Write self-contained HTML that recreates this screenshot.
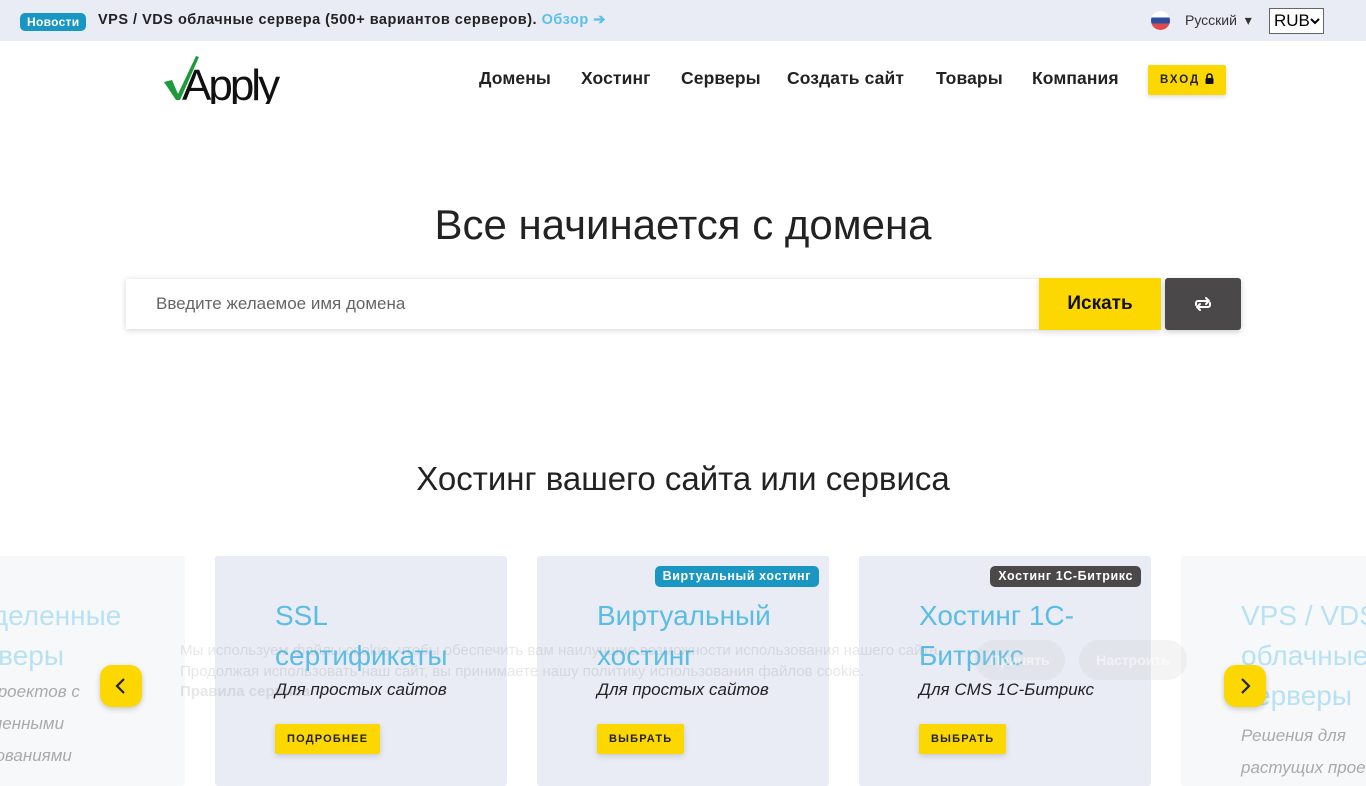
<!DOCTYPE html>
<html><head><meta charset="utf-8"><style>
*{box-sizing:border-box;margin:0;padding:0}
body{width:1366px;height:768px;overflow:hidden;background:#fff;font-family:"Liberation Sans",sans-serif;color:#222;position:relative}
.top{height:41px;background:#e9ecf4;position:relative}
.badge{position:absolute;left:20px;top:13px;height:18px;padding:0 7px;background:#1a96c2;color:#fff;border-radius:5px;font-size:12px;font-weight:bold;line-height:18px;letter-spacing:.3px}
.news{position:absolute;left:98px;top:12px;font-size:14.5px;font-weight:bold;letter-spacing:.5px;color:#222}
.news span{color:#5bc0e8}
.flag{position:absolute;left:1151px;top:11px;width:19px;height:19px;border-radius:50%;background:linear-gradient(#fff 0 33%,#2a4ea0 33% 66%,#e04a4a 66%)}
.lang{position:absolute;left:1185px;top:12px;font-size:14px;color:#333}
.sel{position:absolute;left:1269px;top:8px;width:55px;height:26px;border:1px solid #666;background:#fff;font-size:17px;line-height:24px;padding-left:4px;color:#000;white-space:nowrap;overflow:hidden}
.nav a{position:absolute;top:68px;font-size:17.5px;font-weight:bold;color:#222;text-decoration:none;letter-spacing:.1px}
.login{position:absolute;left:1148px;top:65px;width:78px;height:30px;background:#fcd800;border-radius:2px;font-size:11.5px;font-weight:bold;letter-spacing:2px;line-height:30px;padding-left:12px;box-shadow:0 2px 5px rgba(0,0,0,.15)}
h1{position:absolute;top:201px;left:0;width:1366px;text-align:center;font-size:42px;font-weight:normal;color:#222}
.search{position:absolute;left:126px;top:279px;width:914px;height:50px;background:#fff;box-shadow:0 1px 6px rgba(0,0,0,.18);font-size:17px;color:#666;line-height:50px;padding-left:30px}
.go{position:absolute;left:1039px;top:278px;width:122px;height:52px;background:#fcd800;font-size:19px;font-weight:bold;text-align:center;line-height:52px;color:#111;box-shadow:0 2px 6px rgba(0,0,0,.15)}
.sw{position:absolute;left:1165px;top:278px;width:76px;height:52px;background:#4a4849;border-radius:3px;box-shadow:0 2px 6px rgba(0,0,0,.2)}
h2{position:absolute;top:460px;left:0;width:1366px;text-align:center;font-size:33px;font-weight:normal;color:#222}
.card{position:absolute;top:556px;width:292px;height:230px;background:#e9ecf4;border-radius:3px;padding:40px 0 0 60px}
.card.f{background:#f7f8fa}
.card .t{font-size:28px;color:#5bbde4;line-height:40px}
.card .s{font-size:17px;font-style:italic;color:#222;line-height:28px;margin-top:0}
.card .b{display:inline-block;margin-top:20px;height:30px;line-height:30px;padding:0 12px;background:#fcd800;font-size:11px;font-weight:bold;letter-spacing:1.2px;box-shadow:0 2px 6px rgba(0,0,0,.15);border-radius:2px}
.tag{position:absolute;top:10px;right:10px;height:21px;line-height:21px;padding:0 8px;border-radius:5px;color:#fff;font-size:12.5px;font-weight:bold;letter-spacing:.6px}
.f .t{color:#b8e2f4}.f .s{color:#aaa}
.arr{position:absolute;top:665px;width:42px;height:42px;border-radius:12px;background:#fcd800;box-shadow:0 2px 6px rgba(0,0,0,.2)}
.ck{position:absolute;left:180px;top:641px;font-size:15px;line-height:20.5px;color:rgba(120,120,120,.18)}
.cb{position:absolute;top:640px;height:40px;border-radius:20px;background:rgba(200,200,200,.2);color:rgba(255,255,255,.5);font-weight:bold;font-size:14px;line-height:40px;text-align:center}
</style></head><body>
<div class="top">
<div class="badge">Новости</div>
<div class="news">VPS / VDS облачные сервера (500+ вариантов серверов). <span>Обзор &#10132;</span></div>
<div class="flag"></div>
<div class="lang">Русский &nbsp;▾</div>
<div class="sel">RUB<svg style="position:absolute;left:40px;top:8px" width="10" height="8"><path d="M1 2l4 4 4-4" fill="none" stroke="#000" stroke-width="2"/></svg></div>
</div>
<svg style="position:absolute;left:162px;top:54px" width="128" height="50" viewBox="0 0 128 50">
<path d="M2 28 L10 26 L16 40 L34 2 L37 3 L18 46 L14 46 Z" fill="#1d9a3a"/>
<text x="20" y="46" font-family="Liberation Sans" font-size="44" fill="#111" letter-spacing="-3">Apply</text>
</svg>
<div class="nav">
<a style="left:479px">Домены</a><a style="left:581px">Хостинг</a><a style="left:681px">Серверы</a><a style="left:787px">Создать сайт</a><a style="left:936px">Товары</a><a style="left:1032px">Компания</a>
</div>
<div class="login">ВХОД <svg width="9" height="11" viewBox="0 0 9 11" style="vertical-align:-1px"><path d="M2 5V3.5a2.5 2.5 0 0 1 5 0V5" fill="none" stroke="#111" stroke-width="1.6"/><rect x="0.5" y="5" width="8" height="6" rx="1" fill="#111"/></svg></div>
<h1>Все начинается с домена</h1>
<div class="search">Введите желаемое имя домена</div>
<div class="go">Искать</div>
<div class="sw"><svg width="76" height="52" viewBox="0 0 76 52"><g fill="none" stroke="#fff" stroke-width="2" stroke-linecap="round" stroke-linejoin="round"><path d="M31 27v-2a2 2 0 0 1 2-2h11M41 20l3 3-3 3"/><path d="M45 25v2a2 2 0 0 1-2 2H32M35 32l-3-3 3-3"/></g></svg></div>
<h2>Хостинг вашего сайта или сервиса</h2>
<div class="card f" style="left:-107px"><div class="t">Выделенные<br>серверы</div><div class="s" style="line-height:32px">Для проектов с<br>выделенными<br>требованиями</div></div>
<div class="card" style="left:215px"><div class="t">SSL<br>сертификаты</div><div class="s">Для простых сайтов</div><div class="b">ПОДРОБНЕЕ</div></div>
<div class="card" style="left:537px"><div class="tag" style="background:#1a96c2">Виртуальный хостинг</div><div class="t">Виртуальный<br>хостинг</div><div class="s">Для простых сайтов</div><div class="b">ВЫБРАТЬ</div></div>
<div class="card" style="left:859px"><div class="tag" style="background:#4a4849">Хостинг 1С-Битрикс</div><div class="t">Хостинг 1С-<br>Битрикс</div><div class="s">Для CMS 1С-Битрикс</div><div class="b">ВЫБРАТЬ</div></div>
<div class="card f" style="left:1181px"><div class="t">VPS / VDS<br>облачные<br>серверы</div><div class="s" style="line-height:32px;margin-top:4px">Решения для<br>растущих проектов</div></div>
<div class="ck">Мы используем файлы cookie, чтобы обеспечить вам наилучшие возможности использования нашего сайта.<br>Продолжая использовать наш сайт, вы принимаете нашу политику использования файлов cookie.<br><b>Правила сервиса</b></div>
<div class="cb" style="left:975px;width:90px">Принять</div>
<div class="cb" style="left:1079px;width:108px">Настроить</div>
<div class="arr" style="left:100px"><svg width="42" height="42"><path d="M24 14l-7 7 7 7" fill="none" stroke="#222" stroke-width="2.2"/></svg></div>
<div class="arr" style="left:1224px"><svg width="42" height="42"><path d="M18 14l7 7-7 7" fill="none" stroke="#222" stroke-width="2.2"/></svg></div>
</body></html>
